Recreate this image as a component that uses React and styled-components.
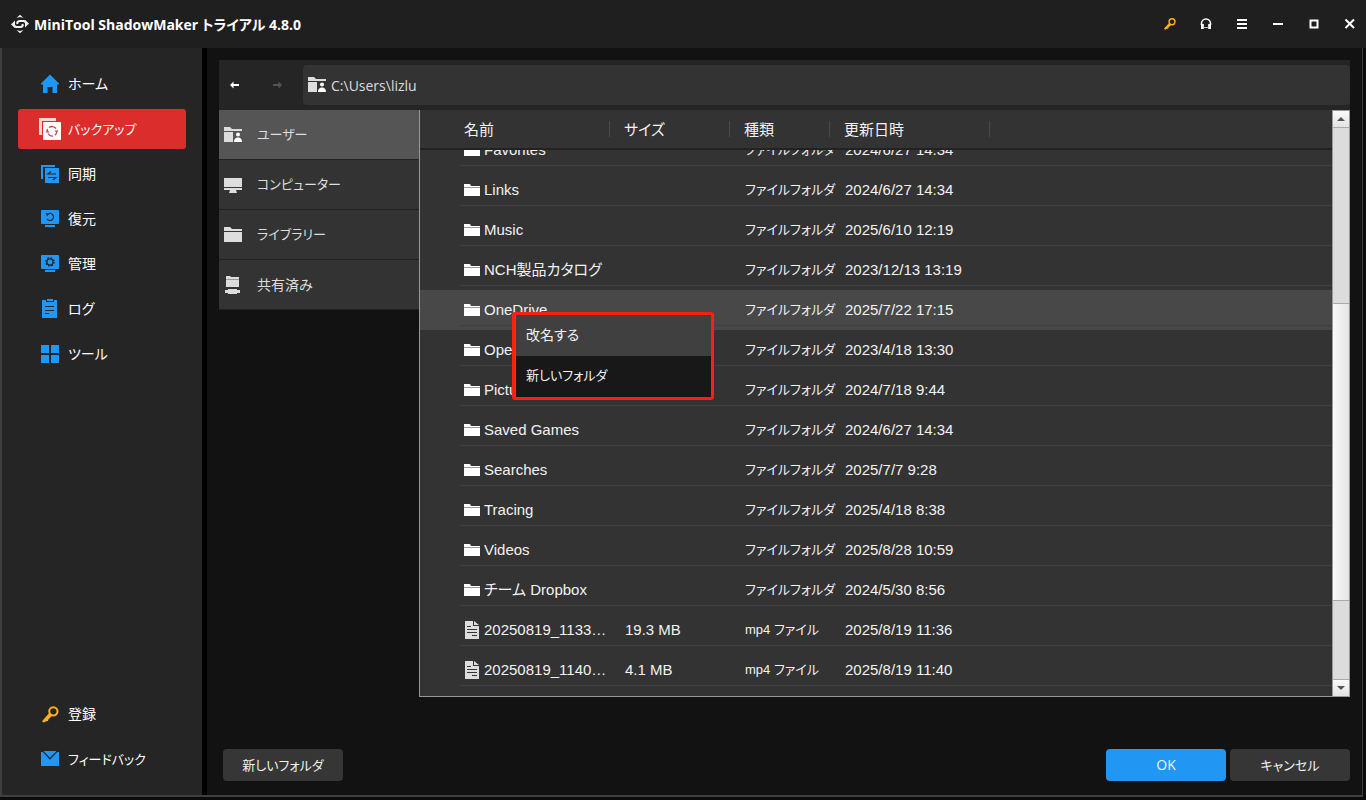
import React, { useLayoutEffect, useRef } from "react"
import styled, { createGlobalStyle } from "styled-components"

const uiFont = `"Open Sans", "Noto Sans CJK JP", sans-serif`
const listFont = `"Liberation Sans", "Noto Sans CJK JP", sans-serif`

///////ICONS////////////////////////////

const LogoIcon = () => (
  <svg width="20" height="20" viewBox="0 0 20 20" fill="#f2f2f2">
    <path d="M6.500 4L10 .8 13.500 4 10 3zM6.500 16l3.500 3.200 3.500-3.200-3.500 1z" />
    <path d="M1 10.500l4-4v7.500zM19 9.500l-4 4V6z" />
    <path
      d="M16 8.200l-2-1.200H9.500c-2 0-2.500 1.500-2 3M4 11.800L6 13h4.500c2 0 2.500-1.500 2-3"
      fill="none"
      stroke="#f2f2f2"
      strokeWidth="2.200"
    />
  </svg>
)

const HomeIcon = () => (
  <svg width="20" height="20" viewBox="0 0 20 20" fill="#2196f3">
    <path d="M10 .5L19 9.500v1h-2V19h-4.500v-6h-5v6H3v-8.500H1v-1z" />
  </svg>
)

const BackupIcon = () => (
  <svg width="22" height="22" viewBox="0 0 22 22">
    <path d="M0 0h17v3H3v14H0z" fill="#f8d6d8" />
    <rect x="4" y="4" width="18" height="18" rx="1" fill="#fff" />
    <path
      d="M10 9.500a5 5 0 0 1 7 1M17.800 14a5 5 0 0 1-2 3.300M14 18a5 5 0 0 1-5-2.500M8 13a5 5 0 0 1 .6-2"
      fill="none"
      stroke="#c4455a"
      strokeWidth="1.300"
    />
    <path d="M6.600 14.500L8.500 12l2 2.500zM15.500 12.500h4l-2 2.500z" fill="#c4455a" />
  </svg>
)

const SyncIcon = () => (
  <svg width="20" height="20" viewBox="0 0 20 20">
    <path d="M1 1h14v2H3v12H1z" fill="#2196f3" />
    <rect x="5" y="4" width="14" height="15" fill="#2196f3" />
    <path d="M16 10H8l3-2.500M8 13.500h8L13 16" fill="none" stroke="#252525" strokeWidth="1.200" />
  </svg>
)

const MonitorBase = ({ children }) => (
  <svg width="20" height="20" viewBox="0 0 20 20">
    <rect x="1" y="1" width="18" height="14" rx="1" fill="#2196f3" />
    <rect x="5" y="16" width="10" height="2" fill="#2196f3" />
    {children}
  </svg>
)

const RestoreIcon = () => (
  <MonitorBase>
    <path d="M7.500 5.200A3.600 3.600 0 1 1 7 10" fill="none" stroke="#252525" strokeWidth="1.200" />
    <path d="M5.600 4l3.400.4-1.800 2.800z" fill="#252525" />
  </MonitorBase>
)

const ManageIcon = () => (
  <MonitorBase>
    <circle cx="10" cy="8" r="3.100" fill="none" stroke="#252525" strokeWidth="1.300" />
    <circle cx="10" cy="8" r="4.200" fill="none" stroke="#252525" strokeWidth="1.200" strokeDasharray="1.650 1.650" />
  </MonitorBase>
)

const LogIcon = () => (
  <svg width="20" height="20" viewBox="0 0 20 20">
    <path d="M2 1h4v2h8V1h3v18H2z" fill="#2196f3" />
    <rect x="7" y="0" width="6" height="2" fill="#2196f3" />
    <path d="M5 7.500h9M5 11.500h9M5 14.500h4" stroke="#252525" strokeWidth="1.200" />
  </svg>
)

const ToolsIcon = () => (
  <svg width="20" height="20" viewBox="0 0 20 20" fill="#2196f3">
    <path d="M1 1h8v8H1zM11 1h8v8h-8zM1 11h8v8H1zM11 11h8v8h-8z" />
  </svg>
)

const KeyIcon = ({ size = 20 }) => (
  <svg width={size} height={size} viewBox="2 2 16 16">
    <circle cx="12.700" cy="7" r="3.900" fill="none" stroke="#fdb022" strokeWidth="1.900" />
    <path d="M8.800 8.600l2.600 2.600-3.400 3.400-.4 1.600-2 .2-.8 1H2.400v-1.600z" fill="#fdb022" />
  </svg>
)

const MailIcon = () => (
  <svg width="20" height="20" viewBox="0 0 20 20" fill="#2196f3">
    <path d="M3.500 2h13L10 8.700z" />
    <path d="M1 3h1.800L10 10.800 17.200 3H19v14H1z" />
  </svg>
)

const HeadsetIcon = () => (
  <svg width="12" height="12" viewBox="0 0 12 12">
    <path d="M1.500 7V5.500a4.500 4.500 0 0 1 9 0V7" fill="none" stroke="#fff" strokeWidth="1.600" />
    <path d="M1 6h2.800v5H1zM8.200 6H11v5H8.200z" fill="#fff" />
    <path d="M4 9.500h4" stroke="#bbb" strokeWidth="1" />
  </svg>
)

const MenuIcon = () => (
  <svg width="12" height="12" viewBox="0 0 12 12" fill="#fff">
    <path d="M1 1h10v2H1zM1 5h10v2H1zM1 9h10v2H1z" />
  </svg>
)

const MinimizeIcon = () => (
  <svg width="12" height="12" viewBox="0 0 12 12" fill="#fff">
    <path d="M1 5h10v2H1z" />
  </svg>
)

const MaximizeIcon = () => (
  <svg width="12" height="12" viewBox="0 0 12 12">
    <rect x="2.500" y="2.500" width="7" height="7" fill="none" stroke="#fff" strokeWidth="2" />
  </svg>
)

const CloseIcon = () => (
  <svg width="12" height="12" viewBox="0 0 12 12">
    <path d="M1.500 1.500l8.500 8.500M10 1.500L1.500 10" stroke="#fff" strokeWidth="2" />
  </svg>
)

const ArrowIcon = ({ flip, color }) => (
  <svg width="10" height="10" viewBox="0 0 10 10">
    <path
      d={flip ? "M10 5L6.500 1.500V4H1v2h5.500v2.500z" : "M0 5l3.500-3.500V4H9v2H3.500v2.500z"}
      fill={color}
    />
  </svg>
)

const UserFolderIcon = () => (
  <svg width="20" height="20" viewBox="0 0 20 20" fill="#ddd">
    <path d="M1 2h6l2 2h10v2H1zM1 7h9v10H1z" />
    <circle cx="15" cy="9.500" r="2" fill="#fff" />
    <path d="M11 17c0-3 1.500-4.500 4-4.500s4 1.500 4 4.500z" fill="#fff" />
  </svg>
)

const ComputerIcon = () => (
  <svg width="20" height="20" viewBox="0 0 20 20" fill="#ddd">
    <path d="M1 3h18v9H1zM1 13h18v2h-6l1 3H6l1-3H1z" />
  </svg>
)

const LibraryIcon = () => (
  <svg width="20" height="20" viewBox="0 0 20 20" fill="#ddd">
    <path d="M1 2h6l2 2h10v2H1zM1 7h18v10H1z" />
  </svg>
)

const SharedIcon = () => (
  <svg width="20" height="20" viewBox="0 0 20 20">
    <path d="M3 1h4l1 1h8v10H3z" fill="#ddd" />
    <path d="M3 4h13v1H3z" fill="#999" />
    <path d="M2 15h3v-1h9v1h3v3h-3v1H5v-1H2z" fill="#ddd" />
  </svg>
)

const FolderIcon = () => (
  <svg width="16" height="14" viewBox="0 0 16 14">
    <path d="M0 1h6l1 2h9v1H0z" fill="#fff" />
    <path d="M0 4h16v1H0z" fill="#999" />
    <path d="M0 5h16v8H0z" fill="#fff" />
  </svg>
)

const FileIcon = () => (
  <svg width="16" height="18" viewBox="0 0 16 18">
    <path d="M1 0h8v5h6v13H1z" fill="#ddd" />
    <path d="M10 0l5 4h-5z" fill="#ddd" />
    <path d="M3 5.500h4M3 8.500h10M3 11.500h10M8 14.500h5" stroke="#333" strokeWidth="1" />
  </svg>
)

///////DATA////////////////////////////

const mainNav = [
  { label: "ホーム", icon: <HomeIcon /> },
  { label: "バックアップ", icon: <BackupIcon />, active: true, compact: true },
  { label: "同期", icon: <SyncIcon /> },
  { label: "復元", icon: <RestoreIcon /> },
  { label: "管理", icon: <ManageIcon /> },
  { label: "ログ", icon: <LogIcon /> },
  { label: "ツール", icon: <ToolsIcon /> },
]

const bottomNav = [
  { label: "登録", icon: <KeyIcon size={17} /> },
  { label: "フィードバック", icon: <MailIcon />, compact: true },
]

const places = [
  { label: "ユーザー", icon: <UserFolderIcon />, active: true, compact: true },
  { label: "コンピューター", icon: <ComputerIcon />, compact: true },
  { label: "ライブラリー", icon: <LibraryIcon />, compact: true },
  { label: "共有済み", icon: <SharedIcon /> },
]

const folder = "ファイルフォルダ"
const files = [
  { name: "Favorites", type: folder, date: "2024/6/27 14:34" },
  { name: "Links", type: folder, date: "2024/6/27 14:34" },
  { name: "Music", type: folder, date: "2025/6/10 12:19" },
  { name: "NCH製品カタログ", type: folder, date: "2023/12/13 13:19" },
  { name: "OneDrive", type: folder, date: "2025/7/22 17:15", selected: true },
  { name: "Open", type: folder, date: "2023/4/18 13:30" },
  { name: "Pictures", type: folder, date: "2024/7/18 9:44" },
  { name: "Saved Games", type: folder, date: "2024/6/27 14:34" },
  { name: "Searches", type: folder, date: "2025/7/7 9:28" },
  { name: "Tracing", type: folder, date: "2025/4/18 8:38" },
  { name: "Videos", type: folder, date: "2025/8/28 10:59" },
  { name: "チーム Dropbox", type: folder, date: "2024/5/30 8:56" },
  { name: "20250819_1133…", size: "19.3 MB", type: "mp4 ファイル", date: "2025/8/19 11:36" },
  { name: "20250819_1140…", size: "4.1 MB", type: "mp4 ファイル", date: "2025/8/19 11:40" },
]

const App = () => {
  const listRef = useRef(null)

  useLayoutEffect(() => {
    listRef.current.scrollTop = 20
  }, [])

  return (
    <Window>
      <GlobalStyle />
      <TitleBar>
        <LogoIcon />
        <Title>MiniTool ShadowMaker トライアル 4.8.0</Title>
        <WindowButtons>
          <IconButton aria-label="登録"><KeyIcon size={12} /></IconButton>
          <IconButton aria-label="サポート"><HeadsetIcon /></IconButton>
          <IconButton aria-label="メニュー"><MenuIcon /></IconButton>
          <IconButton aria-label="最小化"><MinimizeIcon /></IconButton>
          <IconButton aria-label="最大化"><MaximizeIcon /></IconButton>
          <IconButton aria-label="閉じる"><CloseIcon /></IconButton>
        </WindowButtons>
      </TitleBar>
      <Body>
        <Sidebar>
          <NavGroup>
            {mainNav.map(item => (
              <NavLink key={item.label} href="#" $active={item.active} $compact={item.compact}>
                <NavIcon>{item.icon}</NavIcon>
                <Label>{item.label}</Label>
              </NavLink>
            ))}
          </NavGroup>
          <NavGroup>
            {bottomNav.map(item => (
              <NavLink key={item.label} href="#" $compact={item.compact}>
                <NavIcon>{item.icon}</NavIcon>
                <Label>{item.label}</Label>
              </NavLink>
            ))}
          </NavGroup>
        </Sidebar>
        <Main>
          <Browser>
            <Toolbar>
              <HistoryButton aria-label="戻る"><ArrowIcon color="#fff" /></HistoryButton>
              <HistoryButton aria-label="進む" disabled><ArrowIcon flip color="#555" /></HistoryButton>
              <AddressBar>
                <UserFolderIcon />
                <AddressInput aria-label="パス" defaultValue="C:\Users\lizlu" />
              </AddressBar>
            </Toolbar>
            <Panes>
              <Places>
                {places.map(place => (
                  <PlaceButton key={place.label} $active={place.active} $compact={place.compact}>
                    {place.icon}
                    <Label>{place.label}</Label>
                  </PlaceButton>
                ))}
              </Places>
              <FilePane>
                <FileScroll ref={listRef}>
                  <FileTable>
                    <colgroup>
                      <Col $width={190} />
                      <Col $width={120} />
                      <Col $width={100} />
                      <Col $width={160} />
                      <Col />
                    </colgroup>
                    <thead>
                      <tr>
                        <HeadCell $first><HeadLabel>名前</HeadLabel></HeadCell>
                        <HeadCell><HeadLabel>サイズ</HeadLabel></HeadCell>
                        <HeadCell><HeadLabel>種類</HeadLabel></HeadCell>
                        <HeadCell><HeadLabel>更新日時</HeadLabel></HeadCell>
                        <HeadCell as="td" />
                      </tr>
                    </thead>
                    <tbody>
                      {files.map(file => (
                        <FileRow key={file.name} $selected={file.selected}>
                          <Cell $first>
                            <FileName>
                              {file.size ? <FileIcon /> : <FolderIcon />}
                              {file.name}
                            </FileName>
                          </Cell>
                          <Cell>{file.size}</Cell>
                          <TypeCell>{file.type}</TypeCell>
                          <Cell>{file.date}</Cell>
                          <Cell />
                        </FileRow>
                      ))}
                    </tbody>
                  </FileTable>
                </FileScroll>
                <ScrollBar>
                  <ScrollButton aria-label="上へ"><ScrollArrow $up /></ScrollButton>
                  <ScrollTrack>
                    <ScrollThumb />
                  </ScrollTrack>
                  <ScrollButton aria-label="下へ"><ScrollArrow /></ScrollButton>
                </ScrollBar>
                <ContextMenu role="menu">
                  <MenuItem role="menuitem" $active>改名する</MenuItem>
                  <MenuItem role="menuitem" $compact>新しいフォルダ</MenuItem>
                </ContextMenu>
              </FilePane>
            </Panes>
          </Browser>
          <Footer>
            <Button>新しいフォルダ</Button>
            <FooterActions>
              <Button $primary>OK</Button>
              <Button>キャンセル</Button>
            </FooterActions>
          </Footer>
        </Main>
      </Body>
    </Window>
  )
}

export default App

const GlobalStyle = createGlobalStyle`
  * {
    box-sizing: border-box;
  }
  body {
    margin: 0;
    background: #0c0c0c;
  }
  button, input {
    margin: 0;
    padding: 0;
    border: 0;
    background: none;
    color: inherit;
    font: inherit;
    font-feature-settings: inherit;
  }
  svg {
    display: block;
    flex: none;
  }
`

const Window = styled.div`
  display: flex;
  flex-direction: column;
  height: 100vh;
  padding-bottom: 3px;
  background: #0c0c0c;
  color: #f2f2f2;
  font-family: ${uiFont};
  font-size: 14px;
  font-feature-settings: "palt";
`
const Label = styled.span`
  padding-bottom: 2px;
`

///////TITLE BAR////////////////////////////

const TitleBar = styled.header`
  display: flex;
  align-items: center;
  flex: none;
  height: 48px;
  padding: 0 10px;
  background: #1f1f1f;
`
const Title = styled.h1`
  flex: 1;
  margin: 0 0 0 4px;
  color: #fff;
  font-size: 14px;
  font-weight: 700;
`
const WindowButtons = styled.div`
  display: flex;
  gap: 24px;
`
const IconButton = styled.button`
  width: 12px;
  height: 12px;
`

///////SIDEBAR////////////////////////////

const Body = styled.div`
  display: flex;
  flex: 1;
  min-height: 0;
  margin-right: 3px;
  border: solid #3f3f3f;
  border-width: 0 1px 2px 2px;
`
const Sidebar = styled.nav`
  display: flex;
  flex-direction: column;
  justify-content: space-between;
  flex: none;
  width: 205px;
  padding: 16px;
  border-right: 5px solid #000;
  background: #252525;
`
const NavGroup = styled.div`
  display: grid;
  gap: 5px;
`
const NavLink = styled.a`
  display: flex;
  align-items: center;
  gap: 7px;
  height: 40px;
  padding-left: 21px;
  border-radius: 3px;
  background: ${props => (props.$active ? "#dc2d2d" : "transparent")};
  color: #fff;
  font-size: ${props => (props.$compact ? 13 : 14)}px;
  text-decoration: none;
`
const NavIcon = styled.span`
  display: grid;
  place-items: center;
  width: 22px;
`

///////FILE BROWSER////////////////////////////

const Main = styled.main`
  display: flex;
  flex-direction: column;
  flex: 1;
  min-width: 0;
  padding: 12px 12px 14px;
  background: #121212;
`
const Browser = styled.section`
  display: flex;
  flex-direction: column;
  flex: 1;
  min-height: 0;
`
const Toolbar = styled.div`
  display: flex;
  align-items: center;
  flex: none;
  height: 50px;
  background: #252525;
`
const HistoryButton = styled.button`
  display: grid;
  place-items: center;
  width: 42px;
  height: 40px;
  padding-right: 10px;
`
const AddressBar = styled.div`
  display: flex;
  align-items: center;
  flex: 1;
  gap: 4px;
  height: 40px;
  padding-left: 4px;
  border-radius: 4px;
  background: #333;
  color: #ddd;
`
const AddressInput = styled.input`
  flex: 1;
  outline: none;
`
const Panes = styled.div`
  display: flex;
  flex: 1;
  min-height: 0;
`
const Places = styled.div`
  flex: none;
  width: 200px;
`
const PlaceButton = styled.button`
  display: flex;
  align-items: center;
  gap: 14px;
  width: 100%;
  height: 50px;
  padding-left: 4px;
  border-bottom: 1px solid #222;
  background: ${props => (props.$active ? "#555" : "#333")};
  color: #ddd;
  font-size: ${props => (props.$compact ? 13 : 14)}px;
`
const FilePane = styled.div`
  position: relative;
  display: flex;
  flex: 1;
  min-width: 0;
  border: solid #999;
  border-width: 0 0 1px 1px;
  background: #333;
  font-family: ${listFont};
`
const FileScroll = styled.div`
  flex: 1;
  min-width: 0;
  padding-bottom: 20px;
  overflow: hidden;
`
const FileTable = styled.table`
  width: 100%;
  table-layout: fixed;
  border-collapse: separate;
  border-spacing: 0;
  font-size: 15px;
`
const Col = styled.col`
  width: ${props => (props.$width ? `${props.$width}px` : "auto")};
`
const HeadCell = styled.th`
  position: sticky;
  top: 0;
  height: 40px;
  padding: 0 0 0 ${props => (props.$first ? 44 : 14)}px;
  border-bottom: 2px solid #222;
  background: #333;
  font-weight: 400;
  text-align: left;
`
const HeadLabel = styled.div`
  height: 16px;
  border-right: 1px solid #4a4a4a;
  line-height: 18px;
`
const FileRow = styled.tr`
  background: ${props => (props.$selected ? "#484848" : "#333")};
`
const Cell = styled.td`
  height: 40px;
  padding: 0 0 0 ${props => (props.$first ? 44 : 15)}px;
  background: linear-gradient(#404040, #404040) no-repeat
    ${props => (props.$first ? 40 : 0)}px 35px / 100% 1px;
  line-height: 20px;
  white-space: nowrap;
`
const TypeCell = styled(Cell)`
  font-size: 13px;
`
const FileName = styled.div`
  display: flex;
  align-items: center;
  gap: 4px;
`

///////SCROLL BAR////////////////////////////

const ScrollBar = styled.div`
  display: flex;
  flex-direction: column;
  flex: none;
  width: 18px;
  border: 1px solid #999;
  border-bottom: 0;
  background: #dcdcdc;
`
const ScrollButton = styled.button`
  display: grid;
  place-items: center;
  height: 16px;
  background: linear-gradient(#fafafa, #e4e4e4);
`
const ScrollArrow = styled.span`
  border: solid transparent;
  border-width: 0 4px;
  ${props => (props.$up ? "border-bottom" : "border-top")}: 4px solid #555;
`
const ScrollTrack = styled.div`
  display: grid;
  flex: 1;
  grid-template-rows: 175fr 298fr 78fr;
  border: solid #aaa;
  border-width: 1px 0;
`
const ScrollThumb = styled.div`
  grid-row: 2;
  border: solid #aaa;
  border-width: 1px 0;
  background: linear-gradient(90deg, #fafafa, #e4e4e4);
`

///////CONTEXT MENU////////////////////////////

const ContextMenu = styled.div`
  position: absolute;
  top: 202px;
  left: 92px;
  width: 202px;
  border: 3px solid #ff1e12;
  border-radius: 3px;
  font-family: ${uiFont};
`
const MenuItem = styled.button`
  display: block;
  width: 100%;
  height: 41px;
  padding: 0 0 4px 10px;
  border-left: 1px solid #666;
  background: ${props => (props.$active ? "#404040" : "#181818")};
  font-size: ${props => (props.$compact ? 13 : 14)}px;
  text-align: left;
`

///////FOOTER////////////////////////////

const Footer = styled.footer`
  display: flex;
  justify-content: space-between;
  flex: none;
  margin-top: 52px;
  padding-left: 4px;
`
const FooterActions = styled.div`
  display: flex;
  gap: 4px;
`
const Button = styled.button`
  width: 120px;
  height: 32px;
  padding-bottom: 2px;
  border-radius: 4px;
  background: ${props => (props.$primary ? "#2196f3" : "#363636")};
  color: #f2f2f2;
  font-size: ${props => (props.$primary ? 14 : 13)}px;
`
